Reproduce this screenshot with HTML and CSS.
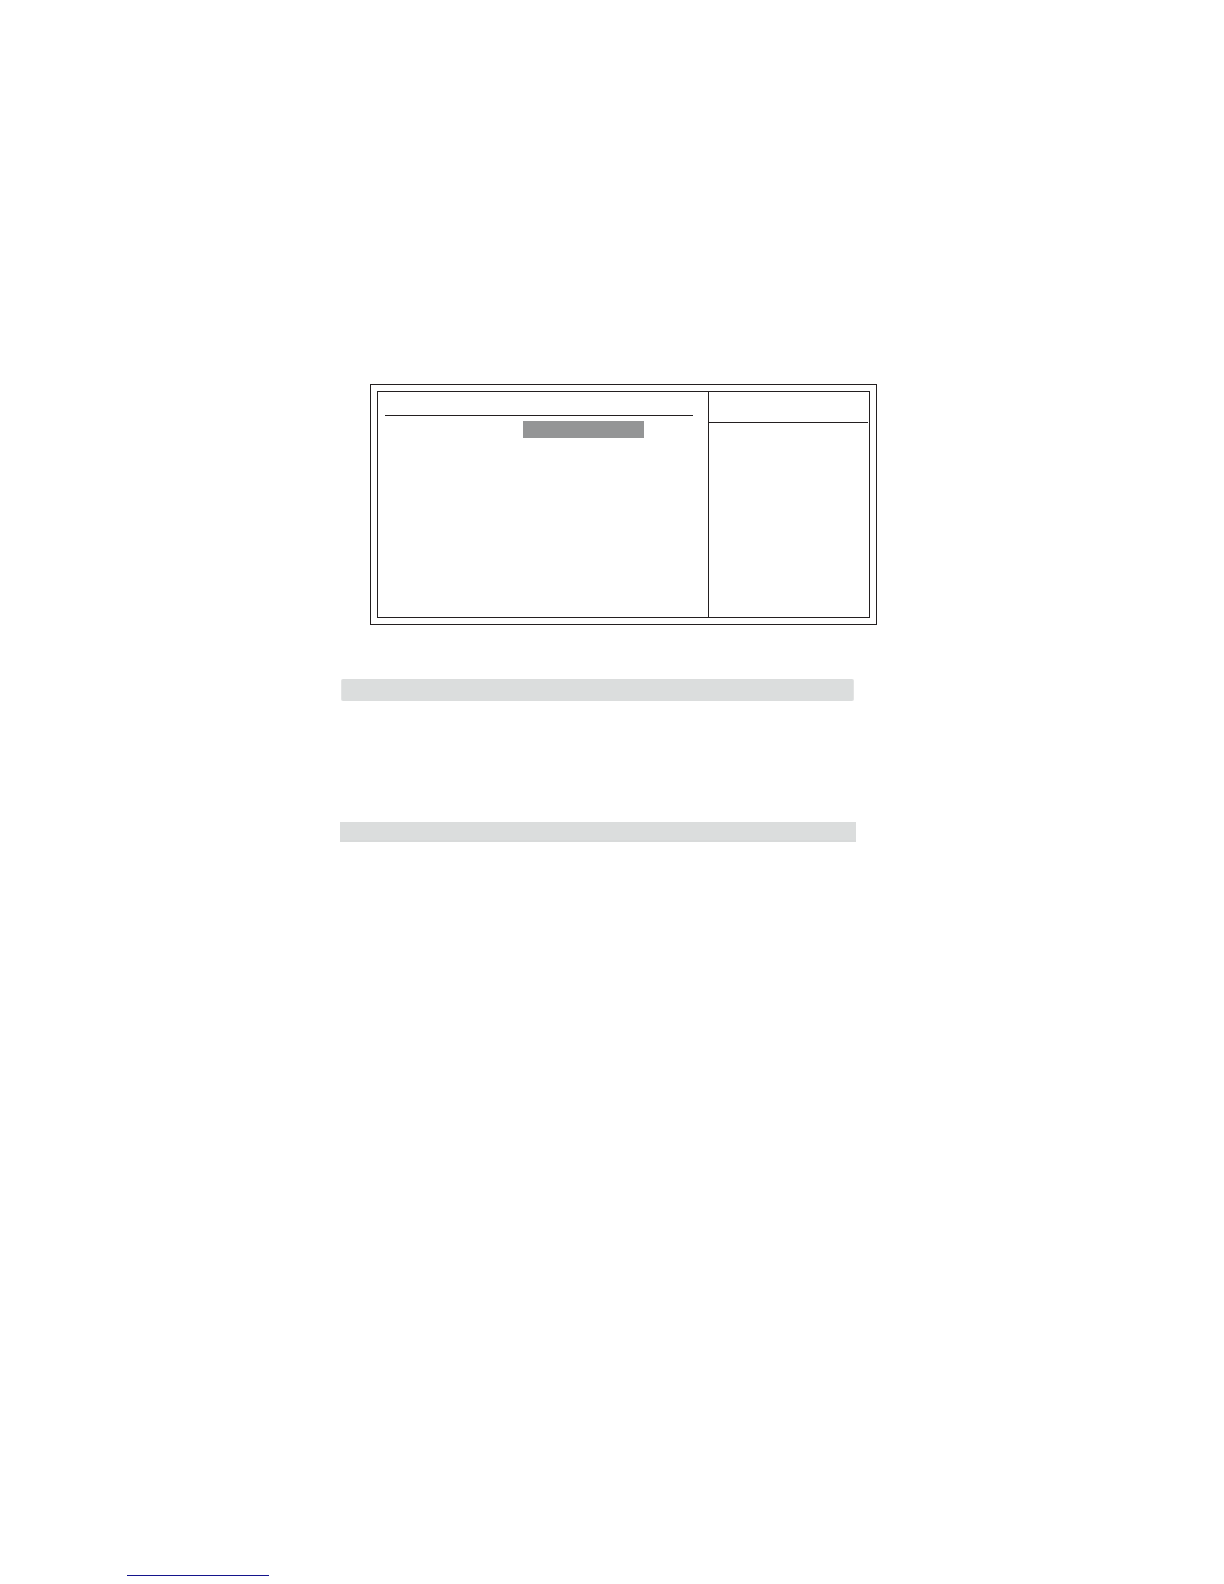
FILE: index.html
```
<!DOCTYPE html>
<html lang="en">
<head>
	<meta charset="utf-8">
	<title>Setup</title>
	<link rel="stylesheet" href="styles.css">
</head>
<body>
<main class="page">
	<div class="content">
		<section class="panel">
			<div class="panel-inner">
				<div class="settings">
					<div class="settings-head"></div>
					<div class="selected"></div>
				</div>
				<aside class="help">
					<div class="help-head"></div>
				</aside>
			</div>
		</section>
		<div class="bar bar-first"></div>
		<div class="bar bar-second"></div>
	</div>
</main>
<footer class="footer">
	<div class="footer-line"></div>
</footer>
</body>
</html>
```
FILE: styles.css
```
* {
	box-sizing: border-box;
}

body {
	display: flex;
	flex-direction: column;
	min-height: 100vh;
	margin: 0;
	background-color: #fff;
	font-family: "Liberation Sans", Arial, sans-serif;
}

/* left margin, text column, right margin */
.page {
	display: grid;
	grid-template-columns: 340fr 516fr 368fr;
	padding-top: 384px;
}

.content {
	grid-column: 2;
}

/* double frame */
.panel {
	margin: 0 -21px 0 30px;
	padding: 6px;
	border: 1px solid #231f20;
}

.panel-inner {
	display: grid;
	grid-template-columns: 1fr 161px;
	min-height: 227px;
	border: 1px solid #231f20;
}

.settings-head {
	height: 24px;
	margin: 0 15px 0 7px;
	border-bottom: 1px solid #231f20;
}

.selected {
	width: 121px;
	height: 17px;
	margin: 5px 0 0 145px;
	background-color: #949596;
}

.help {
	border-left: 1px solid #231f20;
}

.help-head {
	height: 31px;
	margin-right: 1px;
	border-bottom: 1px solid #231f20;
}

.bar {
	background-color: #dbdddd;
}

.bar-first {
	height: 22px;
	margin: 54px 2px 0 1px;
	border: solid #e3e4e4;
	border-width: 0 1px;
	border-radius: 2px;
}

.bar-second {
	height: 20px;
	margin-top: 121px;
	border-bottom: 2px solid #d8dada;
}

.footer {
	margin-top: auto;
	padding: 0 127px 8px;
}

.footer-line {
	width: 142px;
	border-bottom: 1px solid #14148c;
}
```
